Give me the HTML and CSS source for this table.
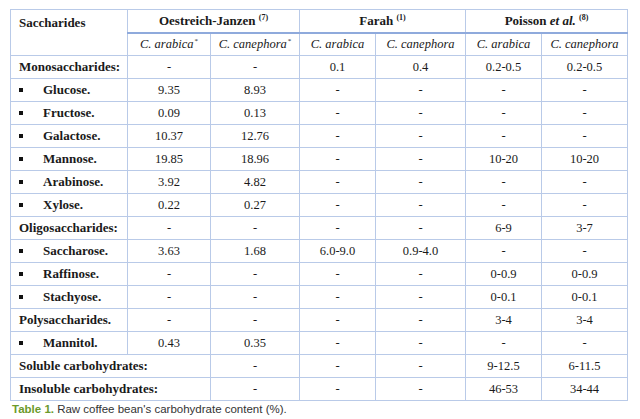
FILE: index.html
```html
<!DOCTYPE html>
<html>
<head>
<meta charset="utf-8">
<link rel="stylesheet" href="styles.css">
</head>
<body>
<div class="page">
<table class="carb">
<colgroup>
<col class="c1"><col class="c2"><col class="c3"><col class="c4"><col class="c5"><col class="c6"><col class="c7">
</colgroup>
<thead>
<tr class="h1">
<th rowspan="2" class="corner">Saccharides</th>
<th colspan="2" class="grp">Oestreich-Janzen <sup>(7)</sup></th>
<th colspan="2" class="grp">Farah <sup>(1)</sup></th>
<th colspan="2" class="grp">Poisson <i>et al.</i> <sup>(8)</sup></th>
</tr>
<tr class="h2">
<th class="sp"><i>C. arabica</i><sup class="ast">*</sup></th>
<th class="sp"><i>C. canephora</i><sup class="ast">*</sup></th>
<th class="sp"><i>C. arabica</i></th>
<th class="sp"><i>C. canephora</i></th>
<th class="sp"><i>C. arabica</i></th>
<th class="sp"><i>C. canephora</i></th>
</tr>
</thead>
<tbody>
<tr><td class="lab">Monosaccharides:</td><td>-</td><td>-</td><td>0.1</td><td>0.4</td><td>0.2-0.5</td><td>0.2-0.5</td></tr>
<tr><td class="lab item"><span class="bul"></span>Glucose.</td><td>9.35</td><td>8.93</td><td>-</td><td>-</td><td>-</td><td>-</td></tr>
<tr><td class="lab item"><span class="bul"></span>Fructose.</td><td>0.09</td><td>0.13</td><td>-</td><td>-</td><td>-</td><td>-</td></tr>
<tr><td class="lab item"><span class="bul"></span>Galactose.</td><td>10.37</td><td>12.76</td><td>-</td><td>-</td><td>-</td><td>-</td></tr>
<tr><td class="lab item"><span class="bul"></span>Mannose.</td><td>19.85</td><td>18.96</td><td>-</td><td>-</td><td>10-20</td><td>10-20</td></tr>
<tr><td class="lab item"><span class="bul"></span>Arabinose.</td><td>3.92</td><td>4.82</td><td>-</td><td>-</td><td>-</td><td>-</td></tr>
<tr><td class="lab item"><span class="bul"></span>Xylose.</td><td>0.22</td><td>0.27</td><td>-</td><td>-</td><td>-</td><td>-</td></tr>
<tr><td class="lab">Oligosaccharides:</td><td>-</td><td>-</td><td>-</td><td>-</td><td>6-9</td><td>3-7</td></tr>
<tr><td class="lab item"><span class="bul"></span>Saccharose.</td><td>3.63</td><td>1.68</td><td>6.0-9.0</td><td>0.9-4.0</td><td>-</td><td>-</td></tr>
<tr><td class="lab item"><span class="bul"></span>Raffinose.</td><td>-</td><td>-</td><td>-</td><td>-</td><td>0-0.9</td><td>0-0.9</td></tr>
<tr><td class="lab item"><span class="bul"></span>Stachyose.</td><td>-</td><td>-</td><td>-</td><td>-</td><td>0-0.1</td><td>0-0.1</td></tr>
<tr><td class="lab">Polysaccharides.</td><td>-</td><td>-</td><td>-</td><td>-</td><td>3-4</td><td>3-4</td></tr>
<tr><td class="lab item"><span class="bul"></span>Mannitol.</td><td>0.43</td><td>0.35</td><td>-</td><td>-</td><td>-</td><td>-</td></tr>
<tr><td class="lab" colspan="2">Soluble carbohydrates:</td><td>-</td><td>-</td><td>-</td><td>9-12.5</td><td>6-11.5</td></tr>
<tr><td class="lab" colspan="2">Insoluble carbohydrates:</td><td>-</td><td>-</td><td>-</td><td>46-53</td><td>34-44</td></tr>
</tbody>
</table>
<p class="caption"><b class="tno">Table 1.</b> Raw coffee bean's carbohydrate content (%).</p>
<p class="caption note">* Percentages calculated based on dry matter and coffee variety analysed.</p>
</div>
</body>
</html>
```
FILE: styles.css
```css
html, body {
  margin: 0;
  padding: 0;
  background: #ffffff;
}
.page {
  padding: 9px 0 0 10px;
}
.carb {
  border-collapse: collapse;
  table-layout: fixed;
  width: 617px;
  font-family: "Liberation Serif", "Times New Roman", serif;
  font-size: 12.5px;
  color: #1a1a1a;
  border: 1px solid #b9cae8;
}
.c1 { width: 117px; }
.c2 { width: 83px; }
.c3 { width: 89px; }
.c4 { width: 76px; }
.c5 { width: 90px; }
.c6 { width: 76px; }
.c7 { width: 86px; }
.carb th, .carb td {
  border: 1px solid #b9cae8;
  padding: 0;
  text-align: center;
  vertical-align: middle;
  white-space: nowrap;
  overflow: hidden;
}
.carb th {
  font-weight: bold;
}
.h1 th { height: 22px; font-size: 13px; }
.h1 th.grp { border-bottom: 2px solid #8faadc; }
.h2 th { height: 21px; font-weight: normal; }
.carb th.corner {
  text-align: left;
  vertical-align: top;
  padding: 5px 0 0 8px;
  font-size: 13px;
}
.carb sup {
  font-size: 8px;
  vertical-align: 5px;
  line-height: 0;
}
.carb sup.ast {
  font-size: 7px;
  vertical-align: 5px;
  margin-left: 1px;
}
.carb tbody td {
  height: 22px;
}
.carb td.lab {
  text-align: left;
  font-weight: bold;
  font-size: 13px;
  padding-left: 8px;
}
.bul {
  display: inline-block;
  width: 4px;
  height: 4px;
  background: #111111;
  vertical-align: 2px;
  margin-right: 20px;
}
.caption {
  margin: 1px 0 0 2px;
  font-family: "Liberation Sans", Arial, sans-serif;
  font-size: 11.5px;
  line-height: 14px;
  color: #333333;
}
.tno {
  color: #6b9a2c;
  font-weight: bold;
}
.note {
  margin-top: 0;
  font-size: 11px;
}
```
